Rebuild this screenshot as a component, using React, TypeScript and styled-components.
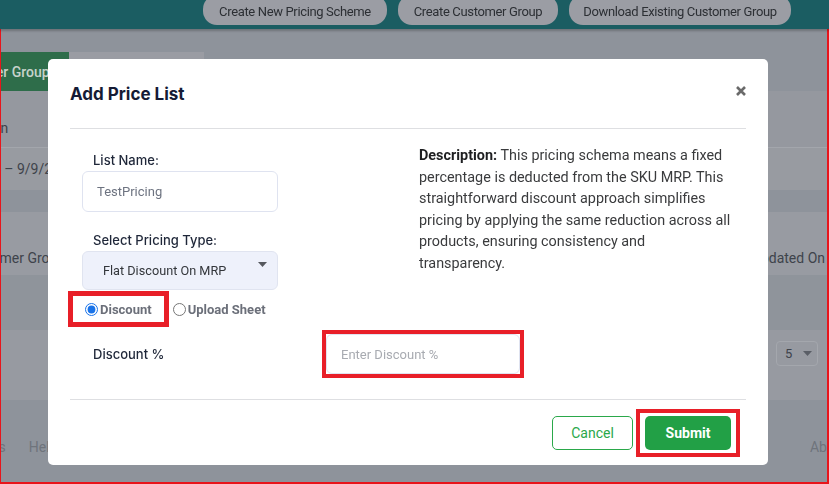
import React from 'react';
import styled, { createGlobalStyle, css } from 'styled-components';

const GlobalStyle = createGlobalStyle`
  html, body {
    margin: 0;
    padding: 0;
  }
  body {
    background: #8e939b;
    font-family: Roboto, "Liberation Sans", sans-serif;
    overflow: hidden;
  }
`;

/* ---------- page behind the dialog (already dimmed) ---------- */

const Page = styled.div`
  width: 829px;
  height: 484px;
  overflow: hidden;
  display: flex;
  flex-direction: column;
  color: #3e434b;
  font-size: 14px;
`;

const TopBar = styled.header`
  position: relative;
  z-index: 1;
  flex: none;
  height: 29px;
  background: #1b5d62;
  display: flex;
  justify-content: flex-end;
  align-items: flex-start;
  gap: 11px;
  padding-right: 38px;
  box-shadow: 0 2px 2px rgba(0, 0, 0, 0.22);
`;

const TopButton = styled.button<{ $width: number }>`
  width: ${({ $width }) => $width}px;
  height: 30px;
  margin-top: -5px;
  padding: 3px 0 0;
  border: none;
  border-radius: 14px;
  background: #9b9da4;
  color: #2c2f34;
  font-family: Roboto, "Liberation Sans", sans-serif;
  font-size: 13px;
  letter-spacing: -0.35px;
  white-space: nowrap;
`;

const Content = styled.main`
  flex: 1;
  display: flex;
  flex-direction: column;
  padding-top: 23px;
`;

const TabRow = styled.div`
  display: flex;
  height: 39px;
`;

const Tab = styled.div<{ $active?: boolean }>`
  display: flex;
  align-items: center;
  overflow: hidden;
  white-space: nowrap;
  ${({ $active }) =>
    $active
      ? css`
          width: 69px;
          background: #2e6d4a;
          color: #c6d3cb;
          font-weight: 500;
        `
      : css`
          width: 135px;
          align-self: flex-start;
          height: 7px;
          background: #9a9ca3;
        `}
`;

const FilterPanel = styled.section`
  background: #95989f;
`;

const PanelRow = styled.div<{ $height: number; $line?: boolean }>`
  height: ${({ $height }) => $height}px;
  display: flex;
  align-items: flex-end;
  box-sizing: border-box;
  ${({ $line }) =>
    $line &&
    css`
      align-items: center;
      border-top: 1px solid #a3a6ac;
      background: #989ba1;
    `}
`;

const ClippedText = styled.span<{ $shift: number; $pb?: number; $pr?: number }>`
  flex: none;
  margin-left: ${({ $shift }) => $shift}px;
  margin-right: ${({ $pr }) => $pr || 0}px;
  padding-bottom: ${({ $pb }) => $pb || 0}px;
  white-space: nowrap;
`;

const TableCard = styled.section`
  margin-top: 22px;
  display: flex;
  flex-direction: column;
`;

const TableHead = styled.div`
  height: 63px;
  background: #989ba2;
  display: flex;
  justify-content: space-between;
  align-items: flex-end;
  padding-bottom: 9px;
  box-sizing: border-box;
  white-space: nowrap;
`;

const TableEmpty = styled.div`
  height: 55px;
  background: #8f949b;
`;

const Pagination = styled.div`
  height: 70px;
  background: #979aa1;
  display: flex;
  justify-content: flex-end;
  align-items: flex-start;
  padding: 11px 11px 0 0;
  box-sizing: border-box;
`;

const PageSize = styled.div`
  width: 42px;
  height: 25px;
  box-sizing: border-box;
  border: 1px solid #a4a7ad;
  border-radius: 4px;
  display: flex;
  align-items: center;
  justify-content: space-between;
  padding: 0 5px 0 8px;
  font-size: 13px;
  color: #3e434b;
`;

const Footer = styled.footer`
  flex: 1;
  display: flex;
  justify-content: space-between;
  align-items: center;
  padding-top: 10px;
  color: #6f747c;
  white-space: nowrap;
`;

const FooterLinks = styled.div`
  display: flex;
  gap: 23px;
  margin-left: -37px;
`;

/* ---------- dialog ---------- */

const Overlay = styled.div`
  position: fixed;
  inset: 0;
  padding: 59px 0 0 48px;
  box-sizing: border-box;
`;

const Modal = styled.div`
  width: 720px;
  height: 406px;
  background: #fff;
  border-radius: 5px;
  display: flex;
  flex-direction: column;
  font-family: Inter, "Noto Sans", sans-serif;
`;

const ModalHeader = styled.div`
  flex: none;
  height: 70px;
  margin: 0 22px;
  border-bottom: 1px solid #dedfe2;
  box-sizing: border-box;
  display: flex;
  align-items: center;
  justify-content: space-between;
`;

const Title = styled.h2`
  margin: 0;
  font-size: 17px;
  font-weight: 700;
  color: #151b35;
`;

const CloseButton = styled.button`
  border: none;
  background: none;
  padding: 0;
  width: 10px;
  height: 10px;
  display: flex;
  margin-top: -6px;
`;

const ModalBody = styled.div`
  flex: 1;
  padding: 15px 22px 0 34px;
  display: flex;
  flex-direction: column;
`;

const TopGrid = styled.div`
  display: grid;
  grid-template-columns: 196px 1fr;
  column-gap: 141px;
`;

const FormColumn = styled.div`
  padding-top: 8px;
  display: flex;
  flex-direction: column;
`;

const FieldLabel = styled.label<{ $gapTop?: number }>`
  display: block;
  padding-left: 11px;
  margin-top: ${({ $gapTop }) => $gapTop || 0}px;
  margin-bottom: 3px;
  font-size: 13px;
  line-height: 16px;
  font-weight: 500;
  color: #1f2739;
  white-space: nowrap;
`;

const TextInput = styled.input<{ $width: number; $height: number }>`
  width: ${({ $width }) => $width}px;
  height: ${({ $height }) => $height}px;
  box-sizing: border-box;
  border: 1px solid #dfe3f0;
  border-radius: 6px;
  padding: 0 14px;
  font-family: Roboto, "Liberation Sans", sans-serif;
  font-size: 13px;
  color: #6d7380;
  outline: none;
  background: #fff;

  &::placeholder {
    color: #a8abb1;
  }
`;

const SelectBox = styled.div`
  height: 39px;
  box-sizing: border-box;
  border: 1px solid #e0e4f0;
  border-radius: 6px;
  background: #eef1fb;
  display: flex;
  justify-content: space-between;
  padding: 0 10px 0 20px;
  font-family: Roboto, "Liberation Sans", sans-serif;
  font-size: 12.7px;
  color: #33363b;
`;

const SelectValue = styled.span`
  align-self: center;
`;

const Caret = styled.svg`
  margin-top: 10px;
`;

const RadioRow = styled.div`
  display: flex;
  align-items: center;
  margin: 1px 0 0 -14px;
  white-space: nowrap;
`;

const Highlight = styled.span<{ $border: number; $py: number; $px: number }>`
  display: inline-flex;
  align-items: center;
  border: ${({ $border }) => $border}px solid #e81f28;
  padding: ${({ $py, $px }) => `${$py}px ${$px}px`};
`;

const RadioOption = styled.label<{ $offset?: number }>`
  display: inline-flex;
  align-items: center;
  gap: 2px;
  margin-left: ${({ $offset }) => $offset || 0}px;
  height: 26px;
  font-family: Roboto, "Liberation Sans", sans-serif;
  font-size: 13px;
  font-weight: 700;
  color: #6b6f79;

  input {
    width: 13px;
    height: 13px;
    margin: 0;
    accent-color: #1a73e8;
  }
`;

const Description = styled.p`
  margin: 1px 0 0;
  width: 313px;
  font-family: Roboto, "Liberation Sans", sans-serif;
  font-size: 14.4px;
  line-height: 21.5px;
  color: #3a3b3d;

  b {
    color: #1e1f21;
  }
`;

const DiscountRow = styled.div`
  display: flex;
  align-items: center;
  margin-top: 3px;
`;

const InlineLabel = styled(FieldLabel)`
  width: 229px;
  margin: 0;
`;

const ModalFooter = styled.div`
  flex: none;
  height: 66px;
  margin: 0 22px;
  border-top: 1px solid #dedfe2;
  box-sizing: border-box;
  display: flex;
  justify-content: flex-end;
  align-items: center;
  gap: 3px;
  padding-right: 6px;
`;

const ActionButton = styled.button<{ $primary?: boolean }>`
  height: 34px;
  box-sizing: border-box;
  border-radius: 5px;
  font-family: Roboto, "Liberation Sans", sans-serif;
  font-size: 14px;
  cursor: pointer;
  ${({ $primary }) =>
    $primary
      ? css`
          width: 86px;
          border: none;
          background: #22a046;
          color: #fff;
          font-weight: 700;
        `
      : css`
          width: 81px;
          border: 1px solid #2aa84a;
          background: #fff;
          color: #2aa84a;
        `}
`;

const Frame = styled.div`
  position: fixed;
  inset: 0;
  border: 1px solid #e8151b;
  border-width: 1px 2px 2px 1px;
  pointer-events: none;
`;

export default function App() {
  return (
    <>
      <GlobalStyle />
      <Page>
        <TopBar>
          <TopButton $width={184}>Create New Pricing Scheme</TopButton>
          <TopButton $width={160}>Create Customer Group</TopButton>
          <TopButton $width={222}>Download Existing Customer Group</TopButton>
        </TopBar>
        <Content>
          <TabRow>
            <Tab $active>
              <ClippedText $shift={-53}>Customer Group</ClippedText>
            </Tab>
            <Tab />
          </TabRow>
          <FilterPanel>
            <PanelRow $height={56}>
              <ClippedText $shift={-119} $pb={11}>Date Range Filter On</ClippedText>
            </PanelRow>
            <PanelRow $height={43} $line>
              <ClippedText $shift={-58}>9/1/2024 – 9/9/2024</ClippedText>
            </PanelRow>
          </FilterPanel>
          <TableCard>
            <TableHead>
              <ClippedText $shift={-37}>Customer Group</ClippedText>
              <ClippedText $shift={0} $pr={4}>Last Updated On</ClippedText>
            </TableHead>
            <TableEmpty />
            <Pagination>
              <PageSize>
                5
                <svg width="9" height="5" viewBox="0 0 9 5">
                  <path d="M0 0h9L4.5 5z" fill="#5a5e66" />
                </svg>
              </PageSize>
            </Pagination>
          </TableCard>
          <Footer>
            <FooterLinks>
              <span>Details</span>
              <span>Help</span>
            </FooterLinks>
            <ClippedText $shift={0} $pr={-38}>About Us</ClippedText>
          </Footer>
        </Content>
      </Page>

      <Overlay>
        <Modal role="dialog" aria-label="Add Price List">
          <ModalHeader>
            <Title>Add Price List</Title>
            <CloseButton aria-label="Close">
              <svg width="10" height="10" viewBox="0 0 10 10">
                <path d="M1 1l8 8M9 1l-8 8" stroke="#6a6a6a" strokeWidth="2.6" strokeLinecap="butt" />
              </svg>
            </CloseButton>
          </ModalHeader>

          <ModalBody>
            <TopGrid>
              <FormColumn>
                <FieldLabel>List Name:</FieldLabel>
                <TextInput $width={196} $height={41} defaultValue="TestPricing" />
                <FieldLabel $gapTop={20}>Select Pricing Type:</FieldLabel>
                <SelectBox>
                  <SelectValue>Flat Discount On MRP</SelectValue>
                  <Caret width="9" height="5" viewBox="0 0 9 5">
                    <path d="M0 0h9L4.5 5z" fill="#55585e" />
                  </Caret>
                </SelectBox>
                <RadioRow>
                  <Highlight $border={5} $py={0} $px={12}>
                    <RadioOption>
                      <input type="radio" name="mode" defaultChecked />
                      Discount
                    </RadioOption>
                  </Highlight>
                  <RadioOption $offset={4}>
                    <input type="radio" name="mode" />
                    Upload Sheet
                  </RadioOption>
                </RadioRow>
              </FormColumn>
              <Description>
                <b>Description:</b> This pricing schema means a fixed percentage is deducted from the SKU
                MRP. This straightforward discount approach simplifies pricing by applying the same
                reduction across all products, ensuring consistency and transparency.
              </Description>
            </TopGrid>

            <DiscountRow>
              <InlineLabel>Discount %</InlineLabel>
              <Highlight $border={4} $py={0} $px={0}>
                <TextInput $width={194} $height={40} placeholder="Enter Discount %" />
              </Highlight>
            </DiscountRow>
          </ModalBody>

          <ModalFooter>
            <ActionButton>Cancel</ActionButton>
            <Highlight $border={4} $py={3} $px={5}>
              <ActionButton $primary>Submit</ActionButton>
            </Highlight>
          </ModalFooter>
        </Modal>
      </Overlay>
      <Frame />
    </>
  );
}
